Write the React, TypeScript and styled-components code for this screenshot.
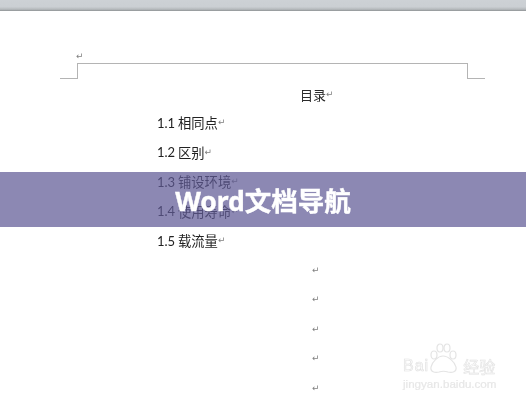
import React from "react";
import styled, { createGlobalStyle } from "styled-components";

const Global = createGlobalStyle`
  html, body { margin: 0; padding: 0; background: #fff; }
`;

const Page = styled.div`
  position: relative;
  width: 526px;
  height: 400px;
  overflow: hidden;
  background: #fff;
  font-family: "Lato", "Noto Sans CJK SC", sans-serif;
`;

const Sheet = styled.div`
  height: 400px;
  overflow: hidden;
  filter: blur(0.35px);
`;

const TopBar = styled.div`
  height: 11px;
  background: linear-gradient(180deg, #cdd1d5 0%, #cbcfd3 62%, #b4b8bb 85%, #8f9395 100%);
`;

const PilcrowHolder = styled.div`
  height: 10px;
  margin-top: 40px;
  padding-left: 76px;
  display: flex;
  align-items: center;
`;

const Mark = styled.span`
  font-family: "DejaVu Sans", sans-serif;
  font-size: 9px;
  line-height: 1;
  color: #808080;
  font-weight: 400;
`;

const Crop = styled.div`
  display: flex;
  margin: 2px 0 0 60px;
  width: 425px;
  height: 16px;
`;

const CropTick = styled.div<{ $side: "left" | "right" }>`
  flex: none;
  width: 17px;
  border-bottom: 1px solid #b4b4b4;
  ${(p) => (p.$side === "left" ? "border-right: 1px solid #b4b4b4;" : "border-left: 1px solid #b4b4b4;")}
`;

const CropTop = styled.div`
  flex: 1;
  border-top: 1px solid #b4b4b4;
`;

const Title = styled.div`
  display: flex;
  align-items: center;
  height: 18px;
  margin: 6px 0 0 300px;
  font-size: 13px;
  color: #2b2b2b;
`;

const Toc = styled.div`
  display: flex;
  flex-direction: column;
  margin: 5px 0 0 157px;
`;

const TocRow = styled.div`
  display: flex;
  align-items: center;
  height: 29.5px;
  font-size: 13.3px;
  color: #222;
`;

const TocNumber = styled.span`
  width: 21px;
  font-size: 13px;
`;

const Empties = styled.div`
  display: flex;
  flex-direction: column;
  margin: 0 0 0 312px;
`;

const EmptyRow = styled.div`
  display: flex;
  align-items: center;
  height: 29.5px;
`;

const Band = styled.div`
  position: absolute;
  left: 0;
  right: 0;
  top: 172px;
  height: 55px;
  padding-top: 3px;
  box-sizing: border-box;
  display: flex;
  align-items: center;
  justify-content: center;
  background: rgba(96, 90, 150, 0.72);
  color: #fff;
  font-family: "Noto Sans", "Noto Sans CJK SC", sans-serif;
  font-size: 26.5px;
  font-weight: 700;
  line-height: 1;
  -webkit-text-stroke: 0.4px #fff;
  filter: blur(0.3px);
`;

const Watermark = styled.div`
  position: absolute;
  left: 403px;
  top: 352px;
  width: 110px;
  color: #fff;
  filter: blur(0.4px);
`;

const Brand = styled.div`
  display: flex;
  align-items: flex-end;
  height: 22px;
  font-family: "Liberation Sans", sans-serif;
  font-size: 16px;
  letter-spacing: 1px;
  font-weight: 400;
  line-height: 1;
  -webkit-text-stroke: 0.7px #e2e2e2;
`;

const BrandCjk = styled.span`
  font-family: "Noto Sans CJK SC", sans-serif;
  font-size: 16px;
  letter-spacing: 0;
  margin-left: 6px;
  -webkit-text-stroke: 0.6px #e2e2e2;
`;

const Paw = styled.svg`
  width: 32px;
  height: 34px;
  margin: -12px -1px 0 -3px;
  flex: none;
`;

const BrandUrl = styled.div`
  margin-top: 4px;
  font-family: "Liberation Sans", sans-serif;
  font-size: 11.6px;
  line-height: 1;
  color: #e8e8e8;
  -webkit-text-stroke: 0.2px #e4e4e4;
  white-space: nowrap;
`;

const rows = [
  ["1.1", "相同点"],
  ["1.2", "区别"],
  ["1.3", "铺设环境"],
  ["1.4", "使用寿命"],
  ["1.5", "载流量"],
];

export default function App() {
  return (
    <Page>
      <Global />
      <Sheet>
        <TopBar />
        <PilcrowHolder>
          <Mark>↵</Mark>
        </PilcrowHolder>
        <Crop>
          <CropTick $side="left" />
          <CropTop />
          <CropTick $side="right" />
        </Crop>
        <Title>
          目录<Mark>↵</Mark>
        </Title>
        <Toc>
          {rows.map(([n, t]) => (
            <TocRow key={n}>
              <TocNumber>{n}</TocNumber>
              {t}
              <Mark>↵</Mark>
            </TocRow>
          ))}
        </Toc>
        <Empties>
          {[0, 1, 2, 3, 4].map((i) => (
            <EmptyRow key={i}>
              <Mark>↵</Mark>
            </EmptyRow>
          ))}
        </Empties>
      </Sheet>
      <Band>Word文档导航</Band>
      <Watermark>
        <Brand>
          Bai
          <Paw viewBox="0 0 32 34" fill="none" stroke="#e4e4e4" strokeWidth="1.2">
            <ellipse cx="8" cy="15" rx="3" ry="4" />
            <ellipse cx="14" cy="8" rx="3" ry="4" />
            <ellipse cx="21" cy="8" rx="3" ry="4" />
            <ellipse cx="27" cy="15" rx="3" ry="4" />
            <path d="M17 16c-5 0-11 6-12 11-1 5 4 6 8 5 3-1 6-1 9 0 4 1 9 0 8-5-1-5-8-11-13-11z" />
          </Paw>
          <BrandCjk>经验</BrandCjk>
        </Brand>
        <BrandUrl>jingyan.baidu.com</BrandUrl>
      </Watermark>
    </Page>
  );
}
